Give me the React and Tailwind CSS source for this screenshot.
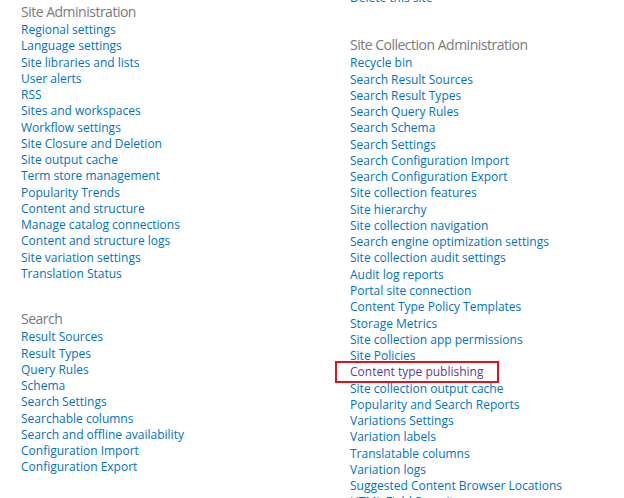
const siteAdmin = [
  "Regional settings",
  "Language settings",
  "Site libraries and lists",
  "User alerts",
  "RSS",
  "Sites and workspaces",
  "Workflow settings",
  "Site Closure and Deletion",
  "Site output cache",
  "Term store management",
  "Popularity Trends",
  "Content and structure",
  "Manage catalog connections",
  "Content and structure logs",
  "Site variation settings",
  "Translation Status",
];

const search = [
  "Result Sources",
  "Result Types",
  "Query Rules",
  "Schema",
  "Search Settings",
  "Searchable columns",
  "Search and offline availability",
  "Configuration Import",
  "Configuration Export",
];

const siteCollection = [
  "Recycle bin",
  "Search Result Sources",
  "Search Result Types",
  "Search Query Rules",
  "Search Schema",
  "Search Settings",
  "Search Configuration Import",
  "Search Configuration Export",
  "Site collection features",
  "Site hierarchy",
  "Site collection navigation",
  "Search engine optimization settings",
  "Site collection audit settings",
  "Audit log reports",
  "Portal site connection",
  "Content Type Policy Templates",
  "Storage Metrics",
  "Site collection app permissions",
  "Site Policies",
  "Content type publishing",
  "Site collection output cache",
  "Popularity and Search Reports",
  "Variations Settings",
  "Variation labels",
  "Translatable columns",
  "Variation logs",
  "Suggested Content Browser Locations",
  "HTML Field Security",
];

const Heading = ({ children }) => (
  <h3 className="h-[20px] text-[14px] leading-[20px] tracking-[-0.5px] text-[#7a7a7a] font-normal whitespace-nowrap">
    {children}
  </h3>
);

const LinkList = ({ items, marked }) => (
  <ul>
    {items.map((item) => (
      <li key={item} className="h-[16.27px] leading-[16.27px] whitespace-nowrap">
        {item === marked ? (
          <span className="relative inline-block text-[#5a3c96]">
            {item}
            <span className="absolute -left-[15px] -right-[16px] -top-[3px] -bottom-[2px] border-2 border-[#e3111b]" />
          </span>
        ) : (
          <a href="#" className="text-[#0072c6]">
            {item}
          </a>
        )}
      </li>
    ))}
  </ul>
);

export default function App() {
  return (
    <div className="w-[624px] h-[498px] overflow-hidden bg-white">
      <div
        className="flex -mt-[10px] pl-[21px] text-[12px]"
        style={{ fontFamily: '"Open Sans", "Segoe UI", sans-serif' }}
      >
        <div className="w-[329px] pt-[12px]">
          <Heading>Site Administration</Heading>
          <LinkList items={siteAdmin} />
          <div className="h-[27px]" />
          <Heading>Search</Heading>
          <LinkList items={search} />
        </div>
        <div>
          <LinkList items={["Delete this site"]} />
          <div className="h-[29px]" />
          <Heading>Site Collection Administration</Heading>
          <LinkList items={siteCollection} marked="Content type publishing" />
        </div>
      </div>
    </div>
  );
}
